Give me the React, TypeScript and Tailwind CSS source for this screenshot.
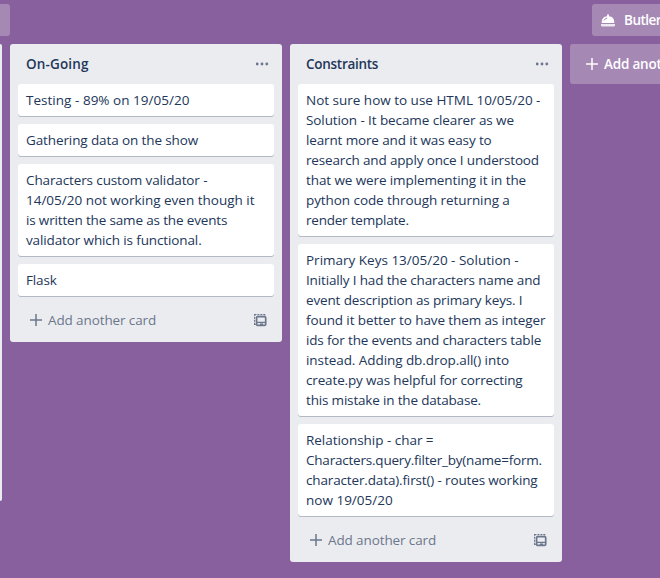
import React from 'react';

type Line = [text: string, tracking: string];

const ongoing: Line[][] = [
  [['Testing - 89% on 19/05/20', 'tracking-[0.025px]']],
  [['Gathering data on the show', 'tracking-[-0.11px]']],
  [
    ['Characters custom validator -', 'tracking-[-0.12px]'],
    ['14/05/20 not working even though it', 'tracking-[-0.006px]'],
    ['is written the same as the events', 'tracking-[-0.16px]'],
    ['validator which is functional.', 'tracking-[-0.12px]'],
  ],
  [['Flask', 'tracking-[-0.15px]']],
];

const constraints: Line[][] = [
  [
    ['Not sure how to use HTML 10/05/20 -', 'tracking-[-0.007px]'],
    ['Solution - It became clearer as we', 'tracking-[-0.097px]'],
    ['learnt more and it was easy to', 'tracking-[-0.139px]'],
    ['research and apply once I understood', 'tracking-[-0.155px]'],
    ['that we were implementing it in the', 'tracking-[-0.1px]'],
    ['python code through returning a', 'tracking-[-0.075px]'],
    ['render template.', 'tracking-[-0.22px]'],
  ],
  [
    ['Primary Keys 13/05/20 - Solution -', 'tracking-[0px]'],
    ['Initially I had the characters name and', 'tracking-[-0.15px]'],
    ['event description as primary keys. I', 'tracking-[-0.145px]'],
    ['found it better to have them as integer', 'tracking-[-0.105px]'],
    ['ids for the events and characters table', 'tracking-[-0.155px]'],
    ['instead. Adding db.drop.all() into', 'tracking-[-0.062px]'],
    ['create.py was helpful for correcting', 'tracking-[-0.15px]'],
    ['this mistake in the database.', 'tracking-[-0.175px]'],
  ],
  [
    ['Relationship - char =', 'tracking-[-0.03px]'],
    ['Characters.query.filter_by(name=form.', 'tracking-[-0.21px]'],
    ['character.data).first() - routes working', 'tracking-[-0.145px]'],
    ['now 19/05/20', 'tracking-[0.01px]'],
  ],
];

function Plus({ className }: { className: string }) {
  return (
    <svg viewBox="0 0 12 12" className={className} fill="none" stroke="currentColor" strokeWidth="1.5">
      <path d="M6 0v12M0 6h12" />
    </svg>
  );
}

function TemplateIcon() {
  return (
    <svg width="13" height="13" viewBox="0 0 13 13" className="block" fill="none" stroke="currentColor">
      <path d="M0.6 1.8V0.6H2.4M3.4 0.6H5.400M6.400 0.6H8.400M9.300 0.6H10.700V1.500M0.6 2.800V4.800M0.6 5.800V7.800M0.6 8.800V10.500H1.800" strokeWidth="1.2" />
      <rect x="2.600" y="2.600" width="9.100" height="8.800" rx="1.200" strokeWidth="1.7" />
      <path d="M3 8.400H11.500" strokeWidth="1.3" />
      <path d="M6 10.200H9" strokeWidth="1.500" />
    </svg>
  );
}

function List({ title, titleTracking, cards }: { title: string; titleTracking: string; cards: Line[][] }) {
  return (
    <section className="w-[272px] shrink-0 rounded-[3px] bg-[#ebecf0]">
      <header className="flex h-10 items-center justify-between pl-4 pr-[13px]">
        <h2 className={`font-semibold ${titleTracking}`}>{title}</h2>
        <svg width="14" height="4" viewBox="0 0 14 4" fill="#6b778c">
          <circle cx="2.2" cy="2" r="1.4" />
          <circle cx="7" cy="2" r="1.4" />
          <circle cx="11.8" cy="2" r="1.4" />
        </svg>
      </header>
      <div className="flex flex-col gap-2 px-2">
        {cards.map((lines) => (
          <article key={lines[0][0]} className="rounded-[3px] bg-white px-2 py-1.5 shadow-[0_1px_0_#b2b9c5]">
            {lines.map(([text, tracking]) => (
              <p key={text} className={tracking}>{text}</p>
            ))}
          </article>
        ))}
      </div>
      <footer className="flex h-[46px] items-center justify-between pb-px pl-5 pr-[15px] pt-[3px] text-[#6b778c]">
        <button className="flex items-center gap-[6px] tracking-[-0.11px]">
          <Plus className="size-3" />
          Add another card
        </button>
        <TemplateIcon />
      </footer>
    </section>
  );
}

export default function App() {
  return (
    <main className="flex h-[578px] w-[660px] flex-col overflow-hidden bg-[#89609e] font-['Open_Sans',sans-serif] text-[13.5px] leading-5 whitespace-nowrap text-[#22365a]">
      <nav className="flex h-11 shrink-0 justify-between pt-1">
        <div className="h-8 w-[10px] rounded-r-[3px] bg-[#a688b5]" />
        <div className="flex h-8 w-[68px] items-center gap-[9px] overflow-hidden rounded-l-[3px] bg-[#a688b5] pl-[9px] font-semibold tracking-[-0.5px] text-white">
          <svg width="14" height="13" viewBox="0 0 14 13" className="shrink-0" fill="currentColor">
            <path d="M6 0.500h2v1.700A6 6 0 0 1 13.3 8v1H.7V8A6 6 0 0 1 6 2.200Z" />
            <path d="M0 10h14v1.200l-.8 1.300H.8L0 11.200Z" opacity=".8" />
            <path d="M3 6.500Q4 4.300 6.200 4" fill="none" stroke="#a688b5" strokeWidth="1" />
          </svg>
          Butler
        </div>
      </nav>
      <div className="flex items-start gap-2">
        <div className="h-[457px] w-[2px] shrink-0 rounded-r-[2px] bg-[#ebecf0]" />
        <List title="On-Going" titleTracking="tracking-[0.14px]" cards={ongoing} />
        <List title="Constraints" titleTracking="tracking-[-0.28px]" cards={constraints} />
        <div className="flex h-10 w-[272px] shrink-0 items-center gap-[6px] rounded-[3px] bg-[#a688b5] pl-4 font-semibold tracking-[-0.2px] text-white">
          <Plus className="size-3" />
          Add another list
        </div>
      </div>
    </main>
  );
}
